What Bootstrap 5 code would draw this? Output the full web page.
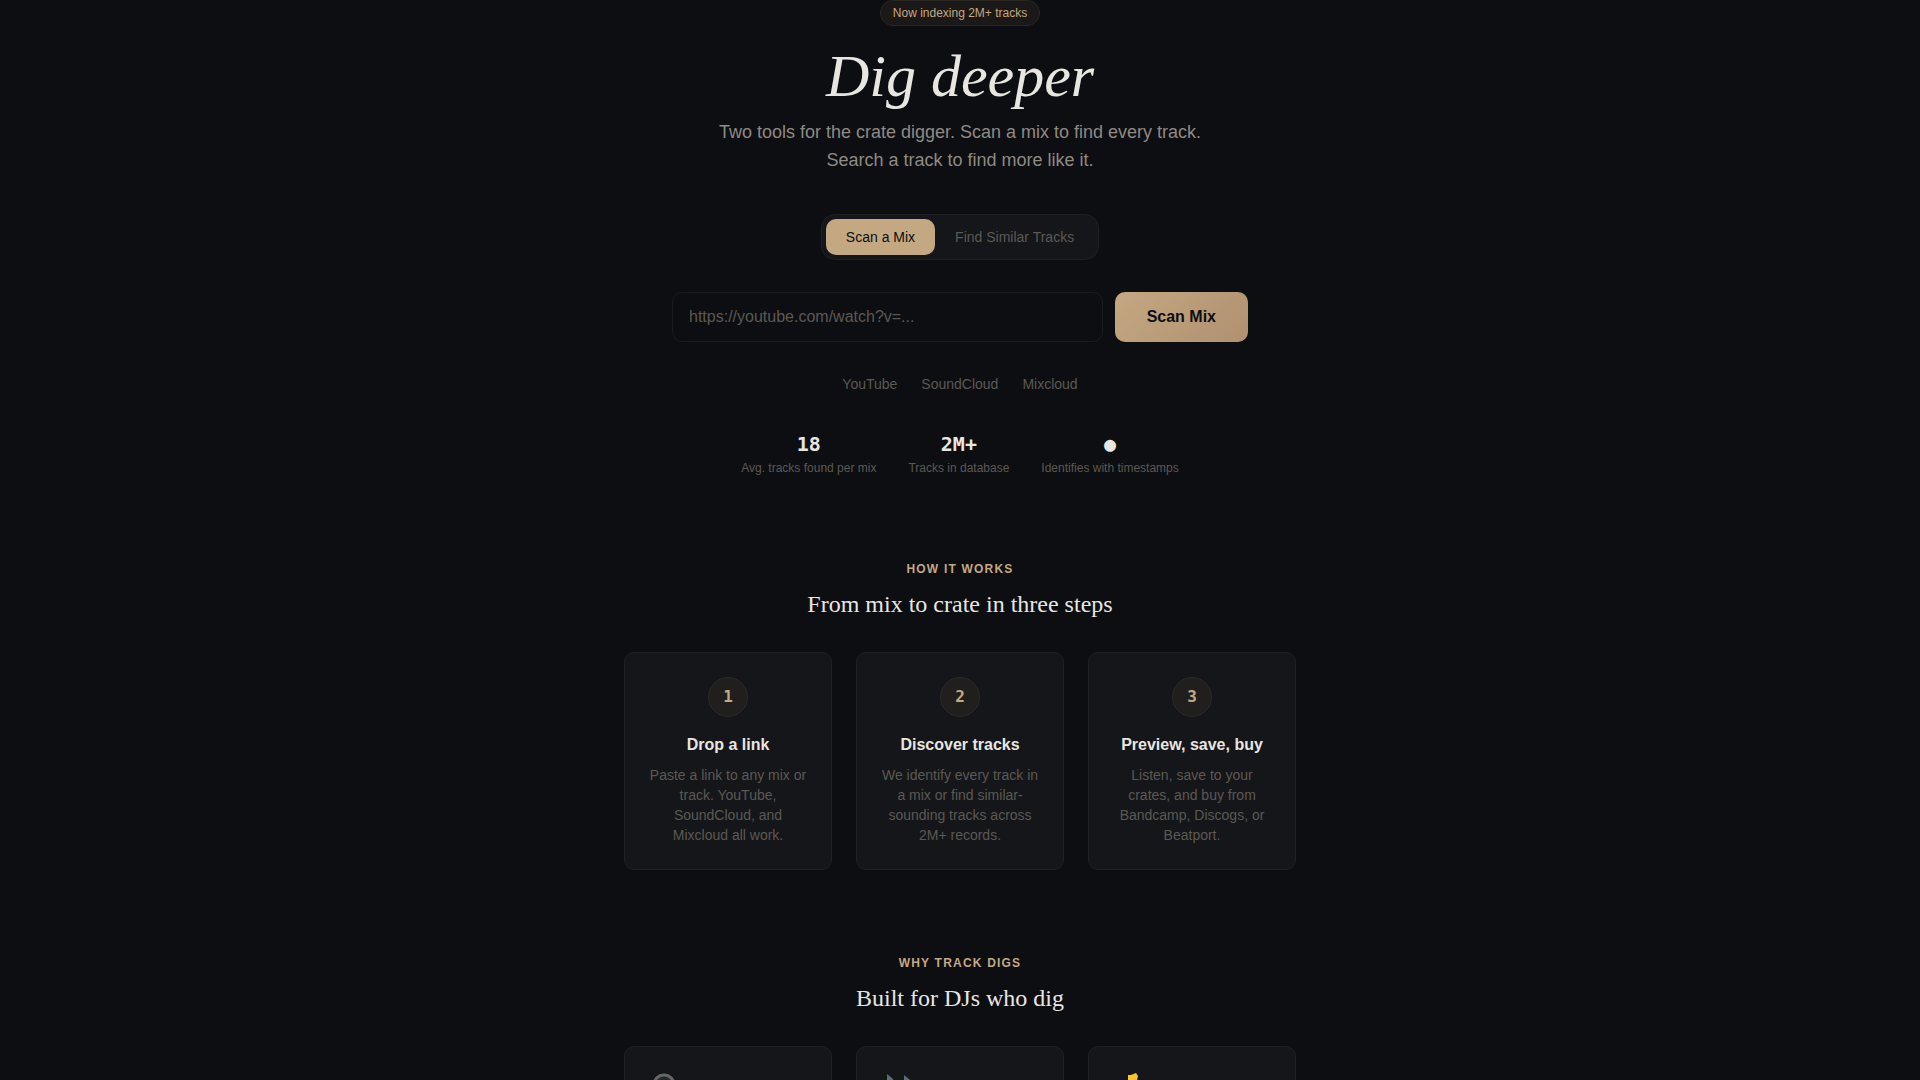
<!DOCTYPE html>
<html lang="en">
<head>
<meta charset="utf-8">
<meta name="viewport" content="width=device-width, initial-scale=1">
<title>Track Digs</title>
<link href="https://cdn.jsdelivr.net/npm/bootstrap@5.3.0/dist/css/bootstrap.min.css" rel="stylesheet">
<style>
  :root {
    --ink: #e8e6e1;
    --soft: #8f8a82;
    --dim: #5c5953;
    --gold: #c4a882;
    --night: #0c0e12;
    --panel: #141619;
    --line: #1f2124;
  }
  body { background: var(--night); color: var(--ink); font-family: "Liberation Sans", Arial, sans-serif; font-size: 14px; line-height: 20px; }
  .page { height: 100vh; overflow: hidden; }
  .serif { font-family: "Liberation Serif", "Times New Roman", serif; font-weight: 400; }
  .mono { font-family: "DejaVu Sans Mono", monospace; font-weight: 700; }
  .pill { font-size: 12px; line-height: 16px; padding: 4px 12px; color: var(--gold); background: #1a1917; border: 1px solid #2b2824; margin-bottom: 20px; }
  .hero-title { font-size: 60px; line-height: 60px; margin-bottom: 12px; }
  .hero-sub { max-width: 512px; font-size: 18px; line-height: 28px; color: var(--soft); margin-bottom: 40px; }
  .modes { background: var(--panel); border: 1px solid var(--line); border-radius: 14px; padding: 4px; margin-bottom: 32px; }
  .modes .btn { font-size: 14px; line-height: 20px; padding: 8px 20px; border: 0; border-radius: 10px; color: var(--dim); }
  .modes .btn.active { background: var(--gold); color: var(--night); }
  .scan { max-width: 576px; gap: 12px; margin-bottom: 32px; }
  .scan .form-control { height: 50px; padding: 0 16px; font-size: 16px; color: var(--ink); background: var(--night); border: 1px solid #1a1c1f; border-radius: 10px; }
  .scan .form-control::placeholder { color: var(--dim); }
  .scan .btn { height: 50px; padding: 0 32px; font-size: 16px; font-weight: 700; color: var(--night); border: 0; border-radius: 10px; background: linear-gradient(135deg, #c4a882, #b09070); }
  .sources { color: var(--dim); margin-bottom: 36px; }
  .stats { gap: 32px; }
  .stat-num { font-size: 20px; line-height: 28px; margin-bottom: 2px; }
  .stat-label { font-size: 12px; line-height: 16px; color: var(--dim); }
  .band { max-width: 672px; margin-top: 84px; }
  .eyebrow { font-size: 12px; line-height: 18px; font-weight: 700; letter-spacing: .1em; color: var(--gold); text-transform: uppercase; margin-bottom: 10px; }
  .band-title { font-size: 24px; line-height: 32px; margin-bottom: 32px; }
  .panel { background: var(--panel); border: 1px solid var(--line); border-radius: 10px; padding: 24px; }
  .step-num { width: 40px; height: 40px; font-size: 16px; color: var(--gold); background: #201f1e; border: 1px solid #2c2a27; }
  .step-title { font-size: 16px; line-height: 24px; font-weight: 700; margin: 16px 0 8px; }
  .step-text { color: var(--dim); }
</style>
</head>
<body>
<main class="page">
  <section class="d-flex flex-column align-items-center text-center">
    <span class="pill rounded-pill">Now indexing 2M+ tracks</span>
    <h1 class="hero-title serif fst-italic">Dig deeper</h1>
    <p class="hero-sub">Two tools for the crate digger. Scan a mix to find every track. Search a track to find more like it.</p>
    <div class="modes d-flex">
      <button type="button" class="btn active">Scan a Mix</button>
      <button type="button" class="btn">Find Similar Tracks</button>
    </div>
    <form class="scan d-flex w-100">
      <input type="url" class="form-control flex-fill" aria-label="Mix link" placeholder="https://youtube.com/watch?v=...">
      <button type="button" class="btn flex-shrink-0">Scan Mix</button>
    </form>
    <div class="sources d-flex gap-4">
      <span>YouTube</span><span>SoundCloud</span><span>Mixcloud</span>
    </div>
    <div class="stats d-flex">
      <div><div class="stat-num mono">18</div><div class="stat-label">Avg. tracks found per mix</div></div>
      <div><div class="stat-num mono">2M+</div><div class="stat-label">Tracks in database</div></div>
      <div><div class="stat-num mono">●</div><div class="stat-label">Identifies with timestamps</div></div>
    </div>
  </section>

  <section class="band mx-auto text-center">
    <p class="eyebrow">How it works</p>
    <h2 class="band-title serif">From mix to crate in three steps</h2>
    <div class="row row-cols-3 gx-4">
      <div class="col"><div class="panel h-100">
        <div class="step-num mono rounded-circle d-flex align-items-center justify-content-center mx-auto">1</div>
        <h3 class="step-title">Drop a link</h3>
        <p class="step-text mb-0">Paste a link to any mix or track. YouTube, SoundCloud, and Mixcloud all work.</p>
      </div></div>
      <div class="col"><div class="panel h-100">
        <div class="step-num mono rounded-circle d-flex align-items-center justify-content-center mx-auto">2</div>
        <h3 class="step-title">Discover tracks</h3>
        <p class="step-text mb-0">We identify every track in a mix or find similar-sounding tracks across 2M+ records.</p>
      </div></div>
      <div class="col"><div class="panel h-100">
        <div class="step-num mono rounded-circle d-flex align-items-center justify-content-center mx-auto">3</div>
        <h3 class="step-title">Preview, save, buy</h3>
        <p class="step-text mb-0">Listen, save to your crates, and buy from Bandcamp, Discogs, or Beatport.</p>
      </div></div>
    </div>
  </section>

  <section class="band mx-auto text-center">
    <p class="eyebrow">Why Track Digs</p>
    <h2 class="band-title serif">Built for DJs who dig</h2>
    <div class="row row-cols-3 gx-4 text-start">
      <div class="col"><div class="panel h-100">
        <svg class="d-block" width="32" height="32" viewBox="0 0 32 32" aria-hidden="true">
          <path d="M20 20l9 9" stroke="#37474f" stroke-width="5" stroke-linecap="round"/>
          <circle cx="15" cy="14" r="10" fill="#222a2e" stroke="#666" stroke-width="3"/>
        </svg>
      </div></div>
      <div class="col"><div class="panel h-100">
        <svg class="d-block" width="32" height="32" viewBox="0 0 32 32" fill="#546e7a" aria-hidden="true">
          <path d="M6 3l5 4c2 2 2 4 1 7l-3-4v12a4 4 0 1 1-3-3z"/>
          <path d="M23 4l5 4c2 2 2 4 1 7l-3-4v12a4 4 0 1 1-3-3z"/>
        </svg>
      </div></div>
      <div class="col"><div class="panel h-100">
        <svg class="d-block" width="32" height="32" viewBox="0 0 32 32" aria-hidden="true">
          <path d="M15 4l3 0 5-2 2 3-1 4 2 10a7 7 0 1 1-5 0L18 10l-3-1z" fill="#fdc22d"/>
        </svg>
      </div></div>
    </div>
  </section>
</main>
<script src="https://cdn.jsdelivr.net/npm/bootstrap@5.3.0/dist/js/bootstrap.bundle.min.js"></script>
</body>
</html>
